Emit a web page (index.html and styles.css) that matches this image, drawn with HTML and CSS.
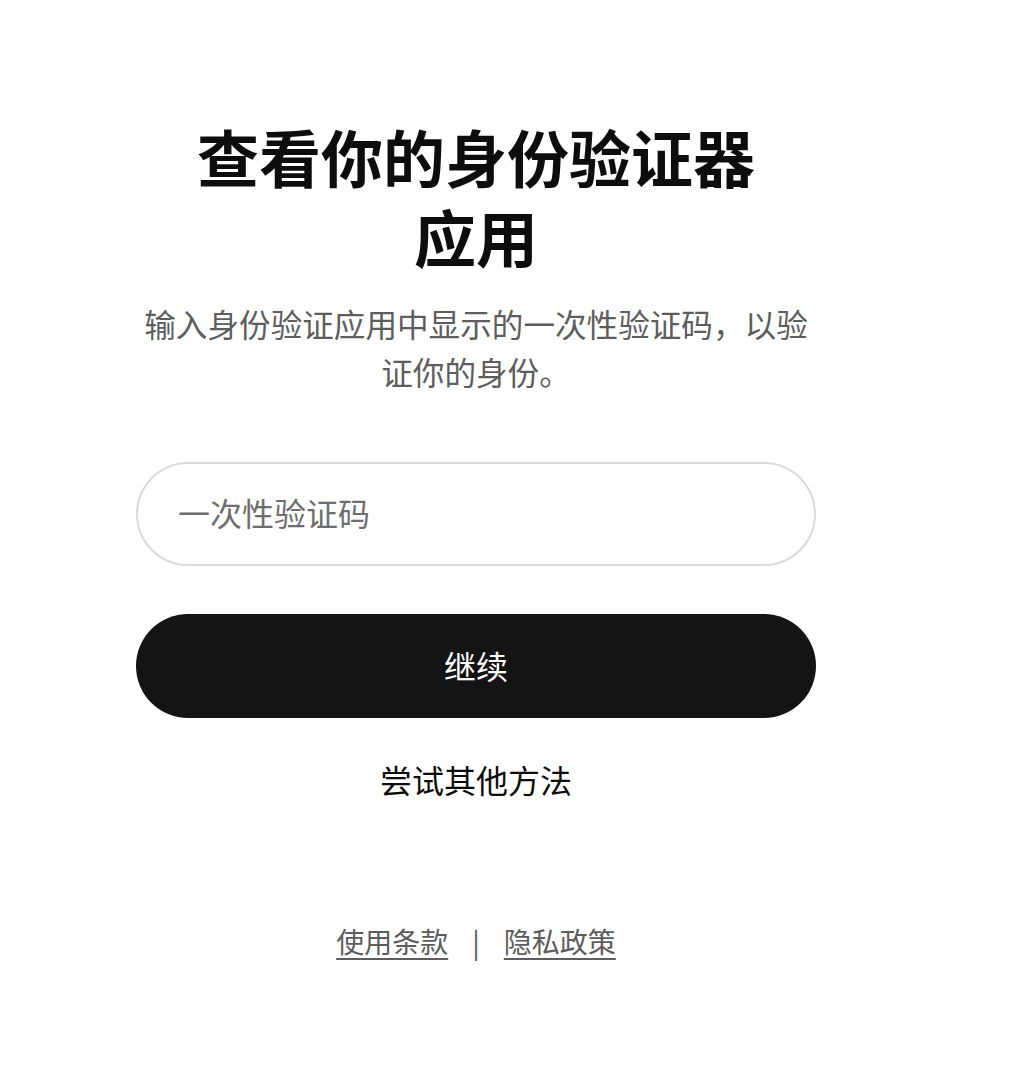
FILE: index.html
```html
<!DOCTYPE html>
<html lang="zh-CN">
<head>
    <meta charset="UTF-8">
    <title>查看你的身份验证器应用</title>
    <link rel="stylesheet" href="styles.css">
</head>
<body>
<main class="auth">
    <h1 class="auth-title">查看你的身份验证器应用</h1>
    <p class="auth-text">输入身份验证应用中显示的一次性验证码，以验证你的身份。</p>

    <form class="auth-form" onsubmit="return false;">
        <input class="code-input" type="text" inputmode="numeric" placeholder="一次性验证码">
        <button class="btn-continue" type="submit">继续</button>
    </form>

    <a class="other-way" href="#">尝试其他方法</a>

    <footer class="legal">
        <a href="#">使用条款</a>
        <span class="legal-sep">|</span>
        <a href="#">隐私政策</a>
    </footer>
</main>
</body>
</html>
```

FILE: styles.css
```css
body {
    margin: 0;
    background: #fff;
    color: #0d0d0d;
    font-family: "Noto Sans CJK SC", "Noto Sans", sans-serif;
}

.auth {
    width: 680px;
    margin-left: 136px;
    padding-top: 116px;
    display: flex;
    flex-direction: column;
    align-items: center;
    text-align: center;
}

.auth-title {
    max-width: 600px;
    margin: 0;
    font-size: 62px;
    line-height: 80px;
    font-weight: 700;
}

.auth-text {
    margin: 23px 0 0;
    font-size: 31.6px;
    line-height: 48px;
    color: #5d5d5d;
}

.auth-form {
    width: 100%;
    margin-top: 67px;
    display: flex;
    flex-direction: column;
    gap: 48px;
}

.code-input {
    box-sizing: border-box;
    width: 100%;
    height: 104px;
    padding: 0 40px 4px;
    border: 2px solid #dadada;
    border-radius: 52px;
    font-family: inherit;
    font-size: 32px;
    color: #0d0d0d;
    outline: none;
}

.code-input::placeholder {
    color: #6e6e6e;
}

.btn-continue {
    height: 104px;
    padding-bottom: 4px;
    border: none;
    border-radius: 52px;
    background: #141414;
    color: #fff;
    font-family: inherit;
    font-size: 32px;
    cursor: pointer;
}

.other-way {
    margin-top: 37px;
    font-size: 32px;
    line-height: 48px;
    color: #0d0d0d;
    text-decoration: none;
}

.legal {
    margin-top: 114px;
    display: flex;
    align-items: center;
    gap: 24px;
    font-size: 28px;
    line-height: 48px;
    color: #5d5d5d;
}

.legal a {
    color: #5d5d5d;
    text-decoration: underline;
    text-underline-offset: 5px;
    text-decoration-thickness: 2px;
}
```
